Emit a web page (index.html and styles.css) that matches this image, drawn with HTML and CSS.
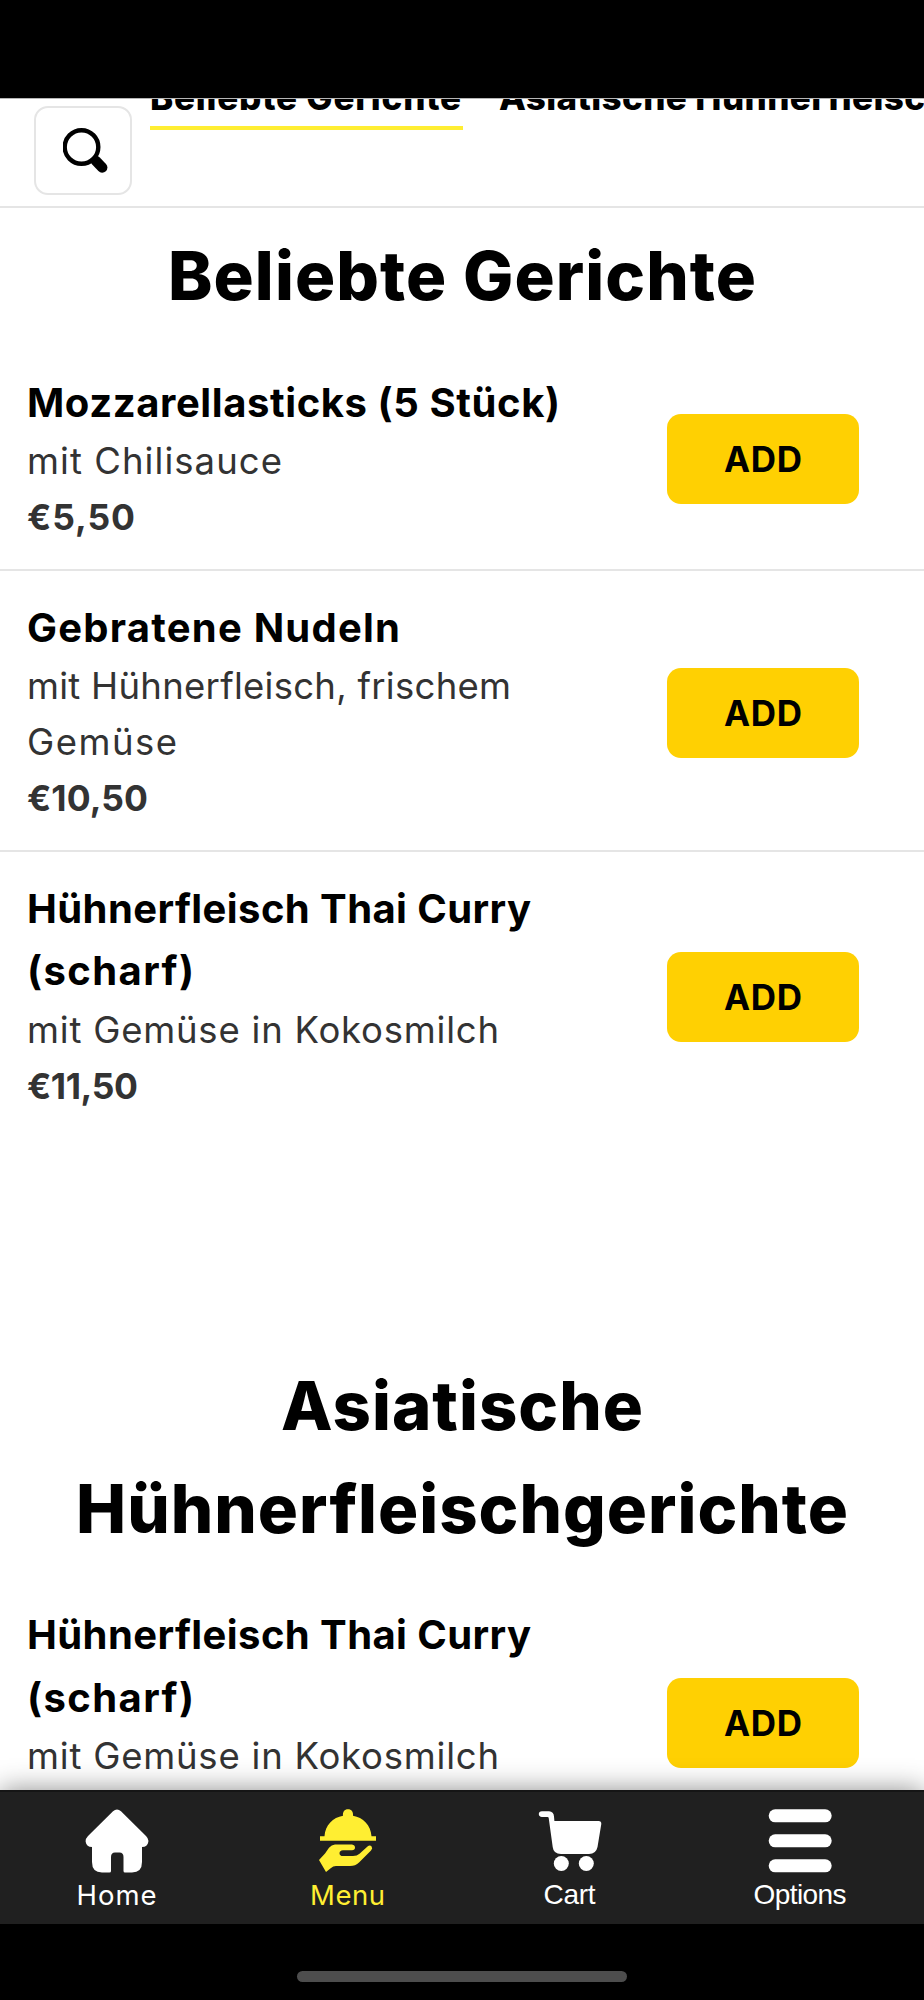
FILE: index.html
```html
<!DOCTYPE html>
<html lang="de">
<head>
<meta charset="utf-8">
<title>Menu</title>
<link rel="stylesheet" href="styles.css">
</head>
<body>
<div class="screen">
  <div class="status-bar"></div>
  <header class="toolbar">
    <button class="search" aria-label="Suche">
      <svg viewBox="0 0 48 48" width="48" height="48"><circle cx="18.500" cy="19" r="16.800" fill="none" stroke="#000" stroke-width="4.400"/><path d="M33 33L39.200 39.500" stroke="#000" stroke-width="10.500" stroke-linecap="round"/></svg>
    </button>
    <nav class="tabs">
      <a class="tab active"><span data-width="311">Beliebte Gerichte</span></a>
      <a class="tab"><span data-width="597">Asiatische Hühnerfleischgerichte</span></a>
    </nav>
  </header>
  <main class="menu">
    <section class="category">
      <h1><span data-width="588">Beliebte Gerichte</span></h1>
      <article class="dish">
        <div class="info">
          <h2><span data-width="533">Mozzarellasticks (5 Stück)</span></h2>
          <p><span data-width="255">mit Chilisauce</span></p>
          <p class="price"><span data-width="108">€5,50</span></p>
        </div>
        <button class="add"><span data-width="78">ADD</span></button>
      </article>
      <article class="dish">
        <div class="info">
          <h2><span data-width="373">Gebratene Nudeln</span></h2>
          <p><span data-width="484">mit Hühnerfleisch, frischem</span><br><span data-width="150">Gemüse</span></p>
          <p class="price"><span data-width="121">€10,50</span></p>
        </div>
        <button class="add"><span data-width="78">ADD</span></button>
      </article>
      <article class="dish">
        <div class="info">
          <h2><span data-width="504">Hühnerfleisch Thai Curry</span><br><span data-width="167">(scharf)</span></h2>
          <p><span data-width="472">mit Gemüse in Kokosmilch</span></p>
          <p class="price"><span data-width="111">€11,50</span></p>
        </div>
        <button class="add"><span data-width="78">ADD</span></button>
      </article>
    </section>
    <section class="category">
      <h1><span data-width="362">Asiatische</span><br><span data-width="772">Hühnerfleischgerichte</span></h1>
      <article class="dish">
        <div class="info tall">
          <h2><span data-width="504">Hühnerfleisch Thai Curry</span><br><span data-width="167">(scharf)</span></h2>
          <p><span data-width="472">mit Gemüse in Kokosmilch</span></p>
        </div>
        <button class="add"><span data-width="78">ADD</span></button>
      </article>
    </section>
  </main>
  <nav class="bottom-nav">
    <a class="item">
      <svg viewBox="0 0 64 64" width="64" height="64"><path fill="#fff" d="M28 2.200Q32-1.400 36 2.200L61 27Q64 30 63.300 33Q62.500 38 57 38L57 53Q57 63.500 47 63.500L40 63.500Q38.500 63.500 38.500 62L38.500 48Q38.500 43.500 34.500 43.500L30 43.500Q26 43.500 26 48L26 62Q26 63.500 24.500 63.500L17 63.500Q7 63.500 7 53L7 38Q1.500 38 .7 33Q.2 30 3 27Z"/></svg>
      <span data-width="80">Home</span>
    </a>
    <a class="item active">
      <svg viewBox="0 0 64 64" width="64" height="64"><g fill="#ffee32"><path d="M27 6.800C26.500 3 28.500.3 32 .3S37.500 3 37 6.800C47 8.500 54.800 16 55.500 27.200H60V31.800H4V27.200H8.500C9.200 16 17 8.500 27 6.800Z"/><path d="M19 35.500H36Q39 36 39 38.600Q39 41.200 36 41.300H27Q23.500 41.600 23.500 44.200Q23.500 47 27 47H37Q41 47 43.500 44.700L51.500 37.500Q54 35.600 55.600 37.500Q57 39.300 55 41.500L43 53.500Q39.500 57 34 57H20Q17 57 15 59L10 63L3 51L9 44.500L13 38.800Q15.500 35.700 19 35.500Z"/></g></svg>
      <span data-width="75">Menu</span>
    </a>
    <a class="item system">
      <svg viewBox="0 0 64 64" width="64" height="64"><g fill="#fff"><path d="M4 2.200H11Q15.700 2.500 16 7.500L16.400 12H60.500Q63.500 12.200 63.300 15L59.500 38Q58 45 51 45H23Q15.500 45 14.700 38L10.700 9Q10.600 8 9.500 8H4Q.8 7.800.8 5.100Q.8 2.400 4 2.200Z"/><circle cx="23.300" cy="54.500" r="7.500"/><circle cx="48.300" cy="54.500" r="7.500"/></g></svg>
      <span data-width="52">Cart</span>
    </a>
    <a class="item system">
      <svg viewBox="0 0 64 64" width="64" height="64"><g fill="#fff"><rect x=".7" y=".3" width="63" height="13" rx="6.500"/><rect x=".7" y="25.300" width="63" height="13" rx="6.500"/><rect x=".7" y="50.300" width="63" height="13" rx="6.500"/></g></svg>
      <span data-width="93">Options</span>
    </a>
  </nav>
  <footer class="gesture-area"><div class="home-indicator"></div></footer>
</div>
<script src="tracking.js"></script>
</body>
</html>
```
FILE: styles.css
```css
* { box-sizing: border-box; margin: 0; padding: 0; }
body { background: #fff; font-family: Inter, "Open Sans", sans-serif; color: #000; }
button { border: 0; font: inherit; color: inherit; }
.screen { width: 924px; height: 2000px; display: flex; flex-direction: column; overflow: hidden; }
.status-bar { height: 98px; flex: none; background: #000; }
.toolbar { height: 110px; flex: none; display: flex; align-items: flex-start; gap: 18px; padding-left: 34px; border-top: 1px solid #b5b5b5; border-bottom: 2px solid #e5e5e5; overflow: hidden; }
.search { display: flex; align-items: flex-start; width: 98px; height: 89px; flex: none; margin-top: 7px; padding: 20px 0 0 27px; background: #fff; border: 2px solid #e5e5e5; border-radius: 14px; }
.search svg { flex: none; }
.tabs { display: flex; gap: 36px; margin-top: -29px; white-space: nowrap; font-size: 35px; font-weight: 800; line-height: 54px; }
.tab { display: block; height: 60px; }
.tab.active { width: 313px; border-bottom: 4px solid #ffee32; }
span[data-width] { display: inline-block; white-space: nowrap; }
.menu { flex: 1; min-height: 0; overflow: hidden; padding-top: 17.200px; }
.category + .category { margin-top: 217px; }
h1 { margin-bottom: 18.300px; text-align: center; font-size: 67px; font-weight: 800; line-height: 102.600px; }
.dish { display: flex; align-items: center; padding: 25.500px 65px 24px 27px; }
.dish + .dish { border-top: 2px solid #e5e5e5; }
.info { flex: 1; }
.info.tall { min-height: 236.400px; }
h2 { font-size: 40px; font-weight: 650; line-height: 62.600px; }
p { font-size: 36.500px; line-height: 55.600px; color: #333; }
.price { font-size: 35.500px; font-weight: 700; }
.add { width: 192px; height: 90px; margin-top: 2px; padding: 0; background: #ffd002; border-radius: 14px; font-size: 35px; font-weight: 750; line-height: 90px; }
.bottom-nav { position: relative; height: 134px; flex: none; display: grid; grid-template-columns: 231px 231px 213px 1fr; padding: 17px 0 0 1px; background: #202020; border-top: 2px solid #151515; box-shadow: 0 0 26px rgba(0, 0, 0, .45); }
.item { display: flex; flex-direction: column; align-items: center; color: #fff; font-size: 27.500px; line-height: 34px; }
.item svg { flex: none; margin-bottom: 5px; }
.item.active { color: #ffee32; }
.item.system { font-family: "Liberation Sans", Arial, sans-serif; font-size: 28px; }
.gesture-area { height: 76px; flex: none; background: #000; padding-top: 47px; }
.home-indicator { width: 330px; height: 11px; margin: 0 auto; background: #4d4d4d; border-radius: 6px; }
```
FILE: tracking.js
```js
// Adjusts letter tracking so each label fills its intended measure.
document.querySelectorAll('[data-width]').forEach(function (label) {
  var natural = label.getBoundingClientRect().width;
  var step = (Number(label.dataset.width) - natural) / (label.textContent.length - 1);
  label.style.letterSpacing = step + 'px';
  label.style.marginRight = -step + 'px';
});
```
